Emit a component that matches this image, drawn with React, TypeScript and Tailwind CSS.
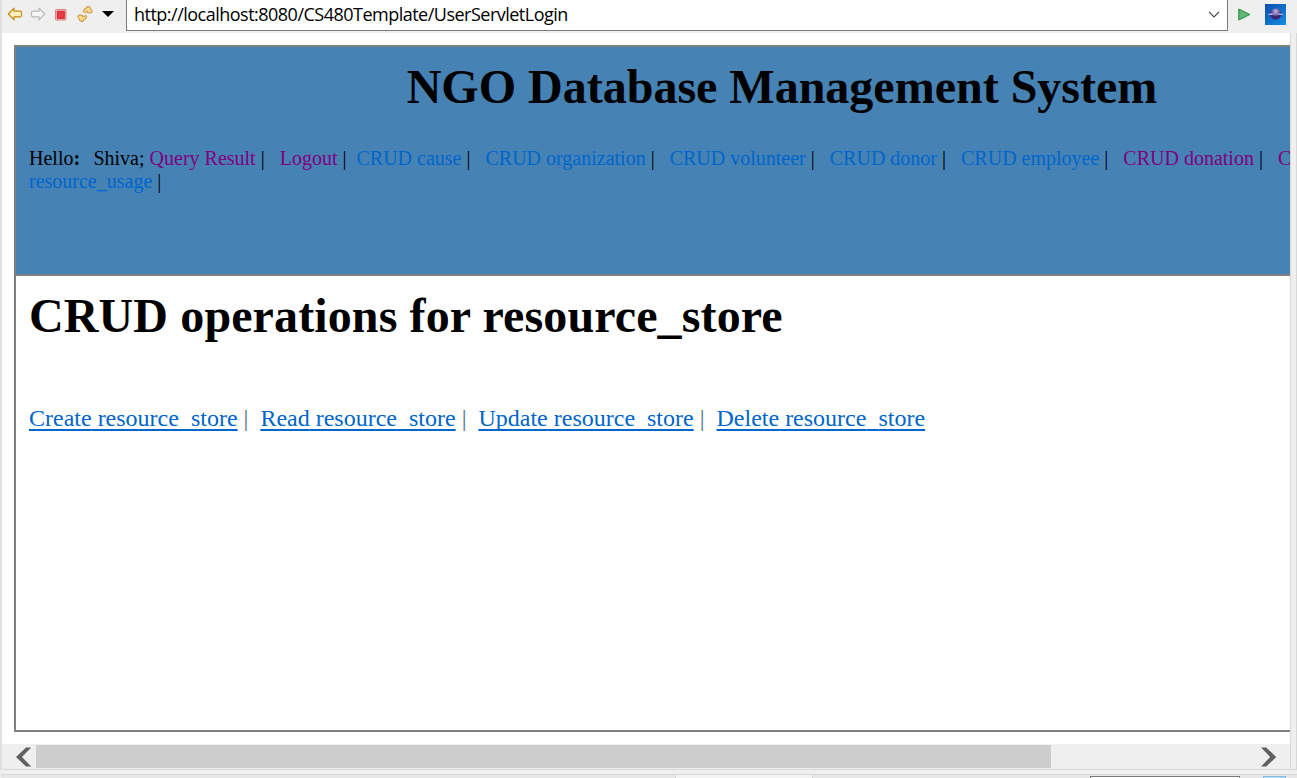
import React from "react";

type NavItem = { label: string; visited?: boolean; gap: string };

const nav: NavItem[] = [
  { label: "Query Result", visited: true, gap: " |\u00a0\u00a0 " },
  { label: "Logout", visited: true, gap: " |\u00a0 " },
  { label: "CRUD cause", gap: " |\u00a0\u00a0 " },
  { label: "CRUD organization", gap: " |\u00a0\u00a0 " },
  { label: "CRUD volunteer", gap: " |\u00a0\u00a0 " },
  { label: "CRUD donor", gap: " |\u00a0\u00a0 " },
  { label: "CRUD employee", gap: " |\u00a0\u00a0 " },
  { label: "CRUD donation", visited: true, gap: " |\u00a0\u00a0 " },
  { label: "CRUD resource_store", visited: true, gap: " |" },
];

const operations = ["Create", "Read", "Update", "Delete"];

function Arrow({ forward = false }: { forward?: boolean }) {
  return (
    <svg width="16" height="16" viewBox="0 0 16 16" className={forward ? "-scale-x-100" : ""}>
      <path
        d="M1.3 8 7 2.2v3h6.2q1.3 0 1.3 1.2v3.2q0 1.2-1.3 1.2H7v3z"
        fill={forward ? "#f5f5f5" : "#fff0bd"}
        stroke={forward ? "#b9b9b9" : "#c68a17"}
        strokeWidth="1.2"
        strokeLinejoin="round"
      />
    </svg>
  );
}

function Toolbar() {
  return (
    <div className="flex h-[33px] shrink-0 bg-[#efefef]">
      <div className="flex h-7 w-[124px] shrink-0 items-center pl-[5px]">
        <Arrow />
        <span className="ml-[7px] flex"><Arrow forward /></span>
        <svg width="14" height="14" viewBox="0 0 14 14" className="ml-2 mt-px">
          <rect x="1.5" y="1.5" width="10.5" height="10.5" rx="1" fill="#f8c7ca" stroke="#dc7b80" />
          <rect x="3.3" y="3.3" width="7" height="7" fill="#e43b46" stroke="#cf222e" />
        </svg>
        <svg width="16" height="16" viewBox="0 0 16 16" className="ml-[9px]">
          <g fill="#fbdc91" stroke="#c68a2c" strokeWidth="1" strokeLinejoin="round">
            <path d="M7.3 6.8 6.4 5.7Q6.4 2.5 9.5 2.1L9.7.8h3l2.7 5.1-1.2.9h-3.8V5.3H9.3z" />
            <path d="M8.7 9.2l.9 1.1q0 3.2-3.1 3.6l-.2 1.3h-3L.6 10.1l1.2-.9h3.8v1.5h1.1z" />
          </g>
        </svg>
        <svg width="12" height="6" viewBox="0 0 12 6" className="ml-[9px]">
          <path d="M0 0h12L6 6z" fill="#000" />
        </svg>
      </div>
      <div className="flex h-[31px] w-[1102px] shrink-0 items-center justify-between border-x border-b border-[#7a7a7a] bg-white pb-px pl-[7px] pr-[7px]">
        <span className="-mt-px font-['Open_Sans',sans-serif] text-[18px] leading-6 tracking-[-0.51px] text-black">
          http://localhost:8080/CS480Template/UserServletLogin
        </span>
        <svg width="12" height="7" viewBox="0 0 12 7">
          <path d="m1 .8 5 5 5-5" fill="none" stroke="#444" strokeWidth="1.2" />
        </svg>
      </div>
      <svg width="13" height="13" viewBox="0 0 13 13" className="ml-[10px] mt-2 shrink-0">
        <path d="M.8 1v11l11-5.5z" fill="#62b775" stroke="#218c3c" />
      </svg>
      <svg width="21" height="21" viewBox="0 0 21 21" className="ml-[14px] mt-1 shrink-0">
        <defs>
          <linearGradient id="tile" x2="1" y2="1"><stop stopColor="#0a4dac" /><stop offset="1" stopColor="#168ee5" /></linearGradient>
          <radialGradient id="orb" cy=".25"><stop stopColor="#c4b9e8" /><stop offset="1" stopColor="#3b2470" /></radialGradient>
        </defs>
        <path d="M0 0h21v21H0z" fill="url(#tile)" />
        <circle cx="10.7" cy="10" r="5.6" fill="url(#orb)" />
        <path d="M1.8 10.2 6 9.5h9l4.2.7-4.2.8H6z" fill="#cbc0ef" />
        <path d="M7 10.2h7.5" stroke="#5a4a94" strokeWidth=".8" />
      </svg>
    </div>
  );
}

function ScrollBar() {
  return (
    <div className="flex h-[25px] shrink-0 items-start bg-[#efefef] pl-[14px]">
      <svg width="16" height="20" viewBox="0 0 16 20" className="mt-[2.5px] shrink-0">
        <path d="M15.2.5H10L0 10l10 9.5h5.2L6 10z" fill="#606060" />
      </svg>
      <div className="ml-1 mt-px h-[23px] w-[1015px] shrink-0 bg-[#cdcdcd]" />
      <svg width="16" height="20" viewBox="0 0 16 20" className="ml-[210px] mt-[2.5px] shrink-0">
        <path d="M0 .5h5.2L15.2 10l-10 9.5H0L9.2 10z" fill="#606060" />
      </svg>
    </div>
  );
}

export default function App() {
  return (
    <div className="flex h-[778px] w-[1297px] flex-col overflow-hidden bg-[#efefef] font-['Liberation_Serif',serif] text-black">
      <div className="flex h-[770px] shrink-0">
        <div className="flex w-[1297px] flex-col border-b border-l-2 border-b-[#d8d8d8] border-l-[#e0e0e0]">
          <Toolbar />
          <div className="flex min-h-0 flex-1">
            <div className="flex w-[1288px] shrink-0 flex-col overflow-hidden bg-white">
              <main className="ml-3 mt-3 flex h-[687px] w-[1536px] shrink-0 flex-col border-2 border-[#808080]">
                <header className="h-[229px] shrink-0 border-b-2 border-[#808080] bg-[#4682b4] px-[13px]">
                  <h1 className="mt-3 text-center text-[48px] font-bold leading-[55px]">NGO Database Management System</h1>
                  <nav className="mt-[33px] whitespace-pre text-[20px] leading-[23px]">
                    <div className="flex h-[23px]">
                      <span>
                        Hello<span className="inline-block w-5 font-['Liberation_Serif',serif] font-bold">:</span>Shiva;{" "}
                      </span>
                      {nav.map((item) => (
                        <span key={item.label}>
                          <a className={item.visited ? "text-[#800080]" : "text-[#0066cc]"}>{item.label}</a>
                          {item.gap}
                        </span>
                      ))}
                    </div>
                    <div><a className="text-[#0066cc]">resource_usage</a> |</div>
                  </nav>
                </header>
                <section className="px-[13px] pt-3">
                  <h2 className="text-[48px] font-bold leading-[55px] tracking-[0.12px]">CRUD operations for resource_store</h2>
                  <div className="mt-[61px] whitespace-pre text-[24px] leading-[28px]">
                    {operations.map((operation, index) => (
                      <span key={operation}>
                        <a className="text-[#0066cc] underline decoration-[#0066cc] decoration-2 underline-offset-[3px] [text-decoration-skip-ink:none]">
                          {operation} resource<span className="text-transparent">_</span>store
                        </a>
                        {index < 3 && <span className="text-[#4a7089]">{" |\u00a0 "}</span>}
                      </span>
                    ))}
                  </div>
                </section>
              </main>
              <div className="mt-auto flex flex-col"><ScrollBar /></div>
            </div>
            <div className="flex w-[7px] justify-between border-l border-[#d8d8d8] bg-[#efefef]">
              <div className="ml-auto w-px bg-[#d8d8d8]" />
            </div>
          </div>
        </div>
      </div>
      <div className="ml-px mt-[4px] flex h-1 border-t border-[#d8d8d8] bg-[#e7e7e7]">
        <div className="ml-[674px] w-[138px] border-x border-[#d8d8d8] bg-[#f4f4f4]" />
        <div className="ml-[277px] mt-px w-[150px] border-x border-t border-[#7a7a7a] bg-white" />
        <div className="ml-[23px] mt-px w-[23px] border border-b-0 border-[#82bce9] bg-[#b9daf3]" />
      </div>
    </div>
  );
}
